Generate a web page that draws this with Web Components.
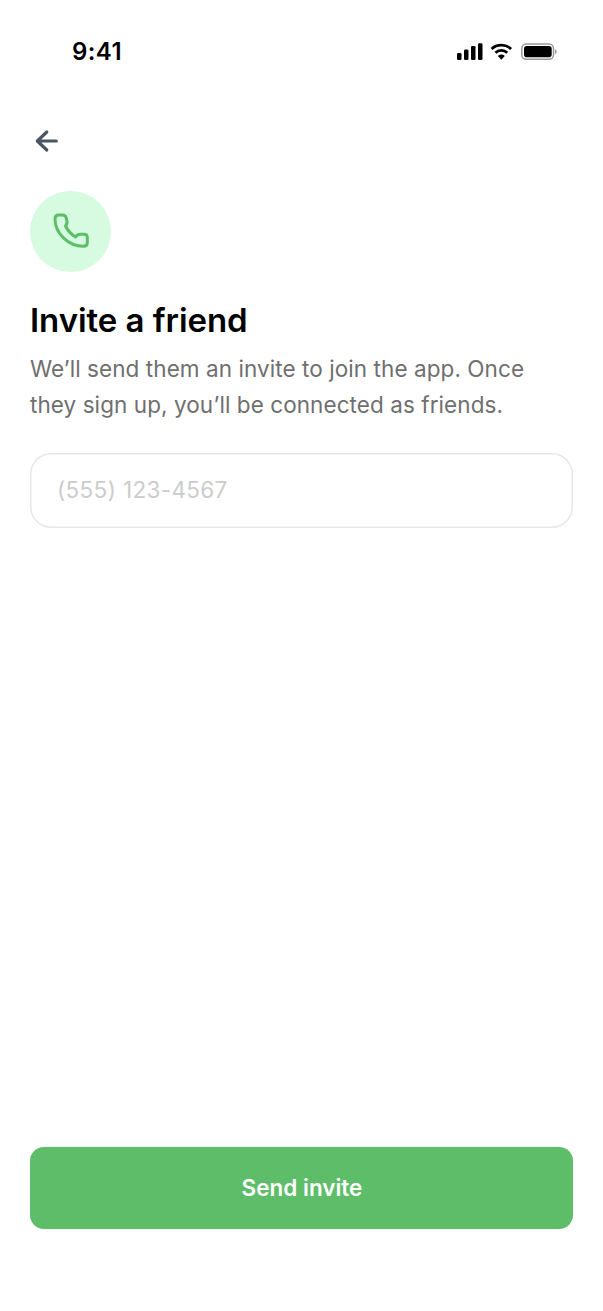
<!DOCTYPE html>
<html lang="en">
<head>
<meta charset="utf-8">
<title>Invite a friend</title>
<style>
  html, body { margin: 0; padding: 0; background: #fff; }
  body { font-family: Inter, "Liberation Sans", sans-serif; }
</style>
</head>
<body>
<invite-screen>
  <status-bar slot="status" time="9:41"></status-bar>
  <back-button slot="nav"></back-button>
  <icon-badge slot="badge"></icon-badge>
  <span slot="title">Invite a friend</span>
  <span slot="text">We’ll send them an invite to join the app. Once they sign up, you’ll be connected as friends.</span>
  <phone-field slot="field" placeholder="(555) 123-4567"></phone-field>
  <send-button slot="action">Send invite</send-button>
</invite-screen>

<script>
class StatusBar extends HTMLElement {
  constructor() {
    super();
    this.attachShadow({ mode: 'open' });
    this.shadowRoot.innerHTML = `
      <style>
        :host {
          display: flex;
          height: 102px;
          box-sizing: border-box;
          padding: 1px 46.3px 0 72px;
          align-items: center;
          justify-content: space-between;
          color: #000;
        }
        .time { font: 560 24px/1 Inter, sans-serif; letter-spacing: 0.4px; }
        .icons { display: flex; align-items: center; }
        .wifi { margin: 0 8.3px 0 7.3px; }
        svg { display: block; }
      </style>
      <span class="time">${this.getAttribute('time')}</span>
      <div class="icons">
        <svg width="25.5" height="17" viewBox="0 0 25.5 17">
          <rect x="0" y="10" width="4.500" height="7" rx="1.300" fill="#000"/>
          <rect x="7" y="6.500" width="4.500" height="10.500" rx="1.300" fill="#000"/>
          <rect x="14" y="3" width="4.500" height="14" rx="1.300" fill="#000"/>
          <rect x="21" y="0.300" width="4.500" height="16.700" rx="1.300" fill="#000"/>
        </svg>
        <svg class="wifi" width="22.7" height="17" viewBox="0 0 22.7 17">
          <path d="M1.600 6C7 .9 15.700 .9 21.100 6" fill="none" stroke="#000" stroke-width="2.800"/>
          <path d="M5.400 9.700C8.800 6.600 13.900 6.600 17.300 9.700" fill="none" stroke="#000" stroke-width="2.800"/>
          <path d="M7.900 12.900 11.350 16.700l3.450-3.800c-2-1.700-4.900-1.700-6.900 0z" fill="#000"/>
        </svg>
        <svg width="35.7" height="17" viewBox="0 0 35.7 17">
          <rect x=".75" y="1.050" width="31.800" height="15.200" rx="4.600" fill="none" stroke="#999" stroke-width="1.500"/>
          <rect x="3" y="3" width="27.700" height="11.300" rx="2.800" fill="#000"/>
          <path d="M34 6.200v5c1-.4 1.700-1.400 1.700-2.500S35 6.600 34 6.200z" fill="#999"/>
        </svg>
      </div>
    `;
  }
}

class BackButton extends HTMLElement {
  constructor() {
    super();
    this.attachShadow({ mode: 'open' });
    this.shadowRoot.innerHTML = `
      <style>
        :host { display: block; width: 36px; height: 36px; }
        svg { display: block; }
      </style>
      <svg width="36" height="36" viewBox="0 0 36 36" fill="none" stroke="#4b5563" stroke-width="3.200" stroke-linecap="round" stroke-linejoin="round">
        <path d="M26.300 18H7.800M16.800 9l-9.500 9 9.500 9"/>
      </svg>
    `;
  }
}

class IconBadge extends HTMLElement {
  constructor() {
    super();
    this.attachShadow({ mode: 'open' });
    this.shadowRoot.innerHTML = `
      <style>
        :host {
          display: flex;
          width: 81px;
          height: 81px;
          border-radius: 50%;
          background: #d6fbe1;
          align-items: center;
          justify-content: center;
        }
        svg { display: block; margin: -1px 0 0 0; }
      </style>
      <svg width="40" height="40" viewBox="0 0 40 40" fill="none" stroke="#5ebd68" stroke-width="3" stroke-linecap="round" stroke-linejoin="round">
        <path d="M7.500 4H11.500Q14.500 4 15.200 7L16 10Q16.500 13 14.500 15Q17.500 21.500 24.500 26Q26.500 23.300 29.500 23.300H33Q36.300 23.300 36.300 26.500V31.500Q36.300 35.300 32.500 35.300C17 35.300 4 22 4 8Q4 4 7.500 4Z"/>
      </svg>
    `;
  }
}

class PhoneField extends HTMLElement {
  constructor() {
    super();
    this.attachShadow({ mode: 'open' });
    this.shadowRoot.innerHTML = `
      <style>
        :host {
          display: block;
          height: 75px;
          box-sizing: border-box;
          box-shadow: inset 0 0 0 1.500px #e5e7eb;
          border-radius: 21px;
          background: #fff;
        }
        input {
          display: block;
          width: 100%;
          height: 100%;
          box-sizing: border-box;
          padding: 0 27px 2px;
          border: 0;
          outline: 0;
          background: transparent;
          font: 400 22.5px Inter, sans-serif;
          letter-spacing: 0.35px;
          color: #111;
        }
        input::placeholder { color: #cccccc; opacity: 1; }
      </style>
      <input type="tel" placeholder="${this.getAttribute('placeholder')}">
    `;
  }
}

class SendButton extends HTMLElement {
  constructor() {
    super();
    this.attachShadow({ mode: 'open' });
    this.shadowRoot.innerHTML = `
      <style>
        :host {
          display: flex;
          height: 82px;
          padding: 0 0 2px 1px;
          box-sizing: border-box;
          border-radius: 14px;
          background: #5ebd68;
          color: #fff;
          align-items: center;
          justify-content: center;
          font: 600 22.5px Inter, sans-serif;
          cursor: pointer;
        }
      </style>
      <slot></slot>
    `;
  }
}

class InviteScreen extends HTMLElement {
  constructor() {
    super();
    this.attachShadow({ mode: 'open' });
    this.shadowRoot.innerHTML = `
      <style>
        :host {
          display: flex;
          flex-direction: column;
          width: 603px;
          height: 1311px;
          overflow: hidden;
          background: #fff;
          font-family: Inter, sans-serif;
        }
        .content {
          flex: 1;
          display: flex;
          flex-direction: column;
          padding: 21px 30px 82px;
        }
        .nav { margin-bottom: 32px; }
        .title {
          margin: 27px 0 0;
          font-size: 33px;
          line-height: 42px;
          font-weight: 600;
          letter-spacing: -0.05px;
          color: #000;
        }
        .text {
          margin: 10px 0 0;
          font-size: 22.5px;
          line-height: 36px;
          letter-spacing: 0.07px;
          color: #6f6f6f;
        }
        .field { margin-top: 30px; }
        .action { margin-top: auto; }
      </style>
      <slot name="status"></slot>
      <div class="content">
        <div class="nav"><slot name="nav"></slot></div>
        <slot name="badge"></slot>
        <h1 class="title"><slot name="title"></slot></h1>
        <p class="text"><slot name="text"></slot></p>
        <div class="field"><slot name="field"></slot></div>
        <div class="action"><slot name="action"></slot></div>
      </div>
    `;
  }
}

customElements.define('status-bar', StatusBar);
customElements.define('back-button', BackButton);
customElements.define('icon-badge', IconBadge);
customElements.define('phone-field', PhoneField);
customElements.define('send-button', SendButton);
customElements.define('invite-screen', InviteScreen);
</script>
</body>
</html>
